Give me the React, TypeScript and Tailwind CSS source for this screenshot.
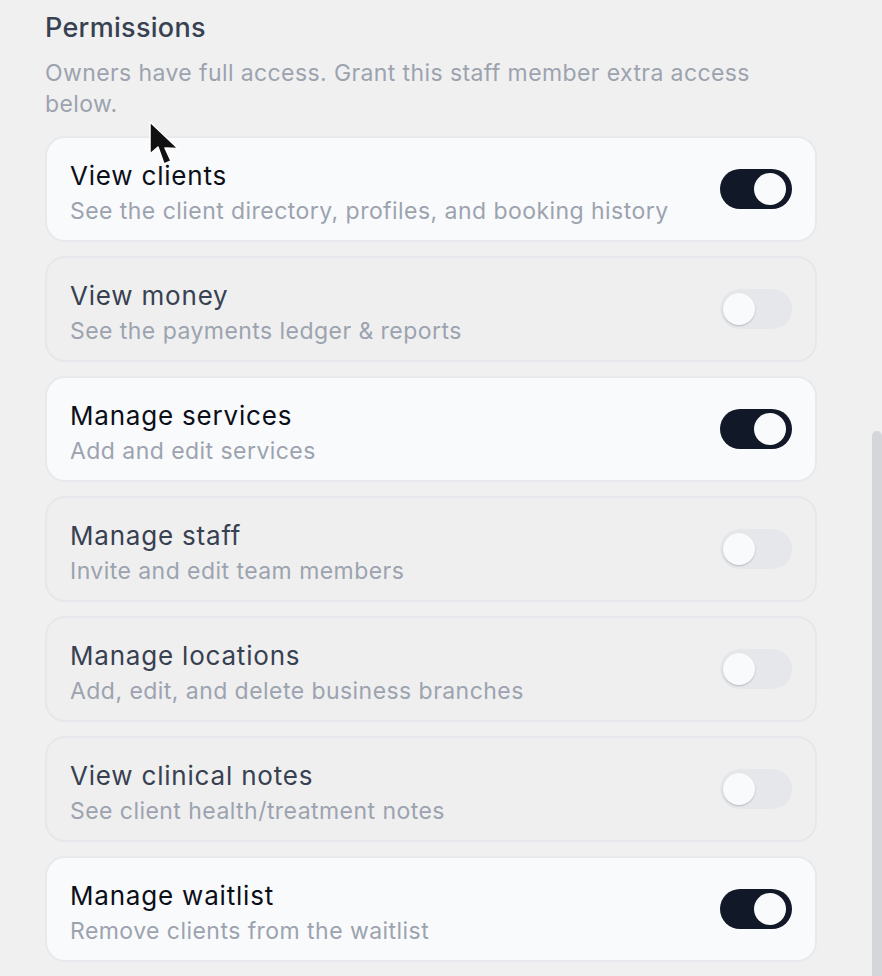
import React, { useState } from "react"

const permissions = [
  { key: "clients", title: "View clients", desc: "See the client directory, profiles, and booking history", on: true },
  { key: "money", title: "View money", desc: "See the payments ledger & reports", on: false },
  { key: "services", title: "Manage services", desc: "Add and edit services", on: true },
  { key: "staff", title: "Manage staff", desc: "Invite and edit team members", on: false },
  { key: "locations", title: "Manage locations", desc: "Add, edit, and delete business branches", on: false },
  { key: "notes", title: "View clinical notes", desc: "See client health/treatment notes", on: false },
  { key: "waitlist", title: "Manage waitlist", desc: "Remove clients from the waitlist", on: true },
]

const Toggle = ({ on, onClick }: { on: boolean; onClick: () => void }) => (
  <button
    type="button"
    onClick={onClick}
    className={`relative h-[40px] w-[72px] shrink-0 rounded-full ${on ? "bg-[#111827]" : "bg-[#e5e7eb]"}`}
  >
    <span
      className={`absolute top-[4px] h-[32px] w-[32px] rounded-full bg-[#f9fafb] ${
        on ? "left-[34px]" : "left-[3px] shadow-[0_1px_2px_rgba(0,0,0,0.2)]"
      }`}
    />
  </button>
)

export default function App() {
  const [state, setState] = useState<Record<string, boolean>>(
    Object.fromEntries(permissions.map((p) => [p.key, p.on]))
  )

  return (
    <div
      className="relative min-h-[976px] w-full overflow-hidden bg-[#f0f0f0]"
      style={{ fontFamily: "Inter, 'Noto Sans', sans-serif" }}
    >
      <div className="w-[772px] pl-[45px] pt-[11px] box-content">
        <h2 className="text-[27px] leading-[34px] font-medium tracking-[0.3px] text-[#374151]">Permissions</h2>
        <p className="mt-[13px] text-[23px] leading-[31px] tracking-[0.4px] text-[#9ca3af]">
          Owners have full access. Grant this staff member extra access below.
        </p>
        <div className="mt-[16px] flex flex-col gap-[14px]">
          {permissions.map((p) => {
            const on = state[p.key]
            return (
              <div
                key={p.key}
                className={`flex h-[106px] items-center justify-between rounded-[20px] border-2 pl-[23px] pr-[23px] ${
                  on ? "border-[#e8e9ec] bg-[#f9fafb]" : "border-[#e6e7ea] bg-[#efefef]"
                }`}
              >
                <div className="flex flex-col pt-[9px]">
                  <span
                    className={`text-[26px] leading-[32px] tracking-[0.8px] ${on ? "text-[#0b0f19]" : "text-[#374151]"}`}
                  >
                    {p.title}
                  </span>
                  <span className="mt-[3px] text-[23px] leading-[32px] tracking-[0.45px] text-[#9ca3af]">{p.desc}</span>
                </div>
                <Toggle on={on} onClick={() => setState((s) => ({ ...s, [p.key]: !s[p.key] }))} />
              </div>
            )
          })}
        </div>
      </div>

      {/* scrollbar thumb */}
      <div className="absolute left-[872px] top-[431px] h-[560px] w-[10px] rounded-t-full bg-[#d4d6da]" />

      {/* mouse cursor */}
      <svg className="absolute left-[146px] top-[119px]" width="40" height="52" viewBox="0 0 40 52">
        <path
          d="M4 3 L4 35 L12 28 L18 45 L25 42 L19 29 L32 29.5 Z"
          fill="#111"
          stroke="#fff"
          strokeWidth="1.5"
          strokeLinejoin="round"
        />
      </svg>
    </div>
  )
}
